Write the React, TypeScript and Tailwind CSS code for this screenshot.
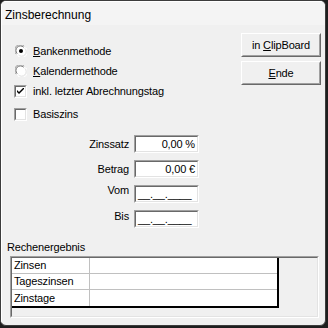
import React from "react";

function Sunken({ className, innerClass, children }: { className: string; innerClass: string; children?: React.ReactNode }) {
  return (
    <div className={`border border-t-[#a0a0a0] border-l-[#a0a0a0] border-b-white border-r-white ${className}`}>
      <div className={`h-full w-full border border-t-[#696969] border-l-[#696969] border-b-[#e3e3e3] border-r-[#e3e3e3] ${innerClass}`}>
        {children}
      </div>
    </div>
  );
}

function Button({ children }: { children: React.ReactNode }) {
  return (
    <div className="w-[80px] h-[24px] border border-t-white border-l-white border-b-[#696969] border-r-[#696969] bg-[#f0f0f0]">
      <div className="h-full border border-t-[#f0f0f0] border-l-[#f0f0f0] border-b-[#a0a0a0] border-r-[#a0a0a0] flex items-center justify-center text-[11px] leading-[13px] text-black">
        {children}
      </div>
    </div>
  );
}

function Radio({ checked }: { checked?: boolean }) {
  return (
    <div className="w-[13px] h-[13px] flex items-center">
      <svg width="12" height="12" viewBox="0 0 12 12" className="ml-[1px]">
        <circle cx="6" cy="6" r="5.5" fill="#ffffff" />
        <path d="M1.2 9.2 A5.5 5.5 0 0 1 9.2 1.2" fill="none" stroke="#a0a0a0" strokeWidth="1" />
        <path d="M2.2 8.6 A4.5 4.5 0 0 1 8.6 2.2" fill="none" stroke="#696969" strokeWidth="1" />
        <path d="M10.8 2.8 A5.5 5.5 0 0 1 2.8 10.8" fill="none" stroke="#ffffff" strokeWidth="1" />
        <path d="M9.8 3.4 A4.5 4.5 0 0 1 3.4 9.8" fill="none" stroke="#e3e3e3" strokeWidth="1" />
        {checked && <circle cx="6" cy="6" r="2" fill="#000000" />}
      </svg>
    </div>
  );
}

function Check({ checked }: { checked?: boolean }) {
  return (
    <Sunken className="w-[13px] h-[13px]" innerClass="bg-white flex items-center justify-center">
      {checked && (
        <svg width="7" height="7" viewBox="0 0 7 7">
          <path d="M0 2 L0 4 L2 6 L7 1 L7 -1 L2 4 Z" fill="#000" />
        </svg>
      )}
    </Sunken>
  );
}

export default function App() {
  const rows = ["Zinsen", "Tageszinsen", "Zinstage"];
  return (
    <div className="w-[328px] h-[328px] bg-[#1e1e1e] font-['Liberation_Sans',Arial,sans-serif] text-[11px] tracking-[-0.15px] text-black">
      <div className="w-[326px] h-[326px] rounded-[6px] border border-[#3c3c3c] bg-[#f0f0f0] overflow-hidden">
        <div className="h-full flex flex-col border-t border-l border-t-white border-l-white">
          <div className="h-[23px] bg-[#f4f4f4] pl-[3px] pt-[3px] flex items-center text-[12px] leading-[14px] tracking-normal">
            Zinsberechnung
          </div>
          <div className="flex items-start">
            <div className="flex-1 mt-[16px] pl-[12px] flex flex-col">
              <div className="h-[20px] flex items-center">
                <Radio checked />
                <span className="ml-[6px] leading-[13px]"><u>B</u>ankenmethode</span>
              </div>
              <div className="h-[20px] flex items-center">
                <Radio />
                <span className="ml-[6px] leading-[13px]"><u>K</u>alendermethode</span>
              </div>
              <div className="h-[20px] flex items-center">
                <Check checked />
                <span className="ml-[6px] leading-[13px]">inkl. letzter Abrechnungstag</span>
              </div>
              <div className="h-[20px] mt-[3px] flex items-center">
                <Check />
                <span className="ml-[6px] leading-[13px]">Basiszins</span>
              </div>
            </div>
            <div className="mt-[8px] mr-[4px] flex flex-col gap-[4px]">
              <Button>
                <span>in <u>C</u>lipBoard</span>
              </Button>
              <Button>
                <span><u>E</u>nde</span>
              </Button>
            </div>
          </div>
          <div className="mt-[11px] flex flex-col gap-[7px]">
            <div className="h-[18px] flex items-center">
              <div className="w-[127px] text-right leading-[13px]">Zinssatz</div>
              <Sunken className="ml-[5px] w-[65px] h-[18px]" innerClass="bg-white flex items-center justify-end pr-[2px] leading-[13px]">
                0,00 %
              </Sunken>
            </div>
            <div className="h-[18px] flex items-center">
              <div className="w-[127px] text-right leading-[13px]">Betrag</div>
              <Sunken className="ml-[5px] w-[65px] h-[18px]" innerClass="bg-white flex items-center justify-end pr-[2px] leading-[13px]">
                0,00 €
              </Sunken>
            </div>
            <div className="h-[18px] flex items-center">
              <div className="w-[127px] text-right leading-[13px] mb-[7px]">Vom</div>
              <Sunken className="ml-[5px] w-[65px] h-[18px]" innerClass="bg-white flex items-center pl-[2px] leading-[13px]">
                __.__.____
              </Sunken>
            </div>
            <div className="h-[18px] flex items-center">
              <div className="w-[127px] text-right leading-[13px] mb-[6px]">Bis</div>
              <Sunken className="ml-[5px] w-[65px] h-[18px]" innerClass="bg-white flex items-center pl-[2px] leading-[13px]">
                __.__.____
              </Sunken>
            </div>
          </div>
          <div className="mt-[12px] h-[14px] pl-[5px] flex items-center leading-[13px]">Rechenergebnis</div>
          <Sunken className="mt-[2px] ml-[8px] w-[309px] h-[62px]" innerClass="bg-[#f0f0f0]">
            <div className="w-[267px] border-r-2 border-b-2 border-black bg-white">
              {rows.map((r, i) => (
                <div key={r} className={`flex h-[16px] ${i < rows.length - 1 ? "border-b border-[#c0c0c0]" : ""}`}>
                  <div className="w-[78px] border-r border-[#c0c0c0] pl-[2px] flex items-center leading-[13px]">{r}</div>
                  <div className="flex-1" />
                </div>
              ))}
            </div>
          </Sunken>
        </div>
      </div>
    </div>
  );
}
